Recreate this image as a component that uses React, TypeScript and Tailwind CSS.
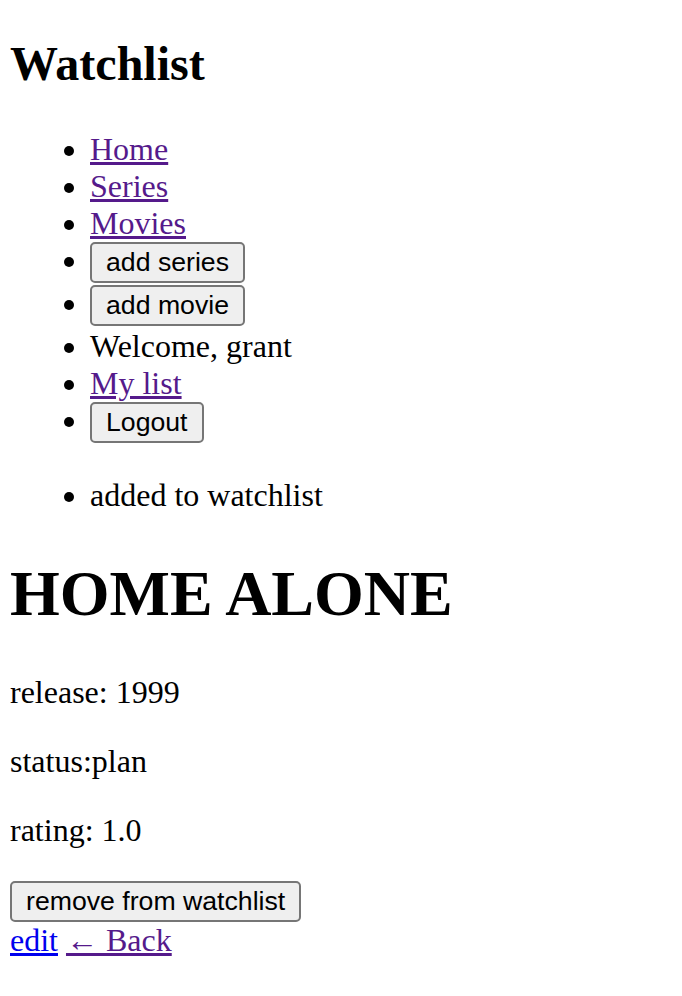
import React from 'react';

const btn =
  "inline-block align-baseline bg-[#efefef] border-2 border-[#767676] rounded-[5px] px-[14px] py-[3px] font-['Liberation_Sans',Arial,sans-serif] text-[26.67px] leading-[normal] text-black";
const visited = 'text-[#551a8b] underline';

export default function App() {
  return (
    <div className="px-[10px] pb-[20px] font-['Liberation_Serif','Times_New_Roman',serif] text-[32px] leading-[normal] text-black bg-white">
      {/* Header */}
      <h2 className="text-[48px] font-bold mt-[36px] mb-[40px]">Watchlist</h2>
      <ul className="list-disc pl-[80px] my-[32px]">
        <li>
          <a href="#" className={visited}>Home</a>
        </li>
        <li>
          <a href="#" className={visited}>Series</a>
        </li>
        <li>
          <a href="#" className={visited}>Movies</a>
        </li>
        <li className="h-[43px]">
          <button className={btn}>add series</button>
        </li>
        <li className="h-[43px]">
          <button className={btn}>add movie</button>
        </li>
        <li>Welcome, grant</li>
        <li>
          <a href="#" className={visited}>My list</a>
        </li>
        <li className="h-[43px]">
          <button className={btn}>Logout</button>
        </li>
      </ul>

      {/* Messages */}
      <ul className="list-disc pl-[80px] my-[32px]">
        <li>added to watchlist</li>
      </ul>

      {/* Detail */}
      <h1 className="text-[64px] font-bold my-[43px]">HOME ALONE</h1>
      <p className="my-[32px]">release: 1999</p>
      <p className="my-[32px]">status:plan</p>
      <p className="my-[32px]">rating: 1.0</p>
      <div>
        <button className={btn}>remove from watchlist</button>
        <br />
        <a href="#" className="text-[#0000ee] underline">edit</a>{' '}
        <a href="#" className={visited}>← Back</a>
      </div>
    </div>
  );
}
